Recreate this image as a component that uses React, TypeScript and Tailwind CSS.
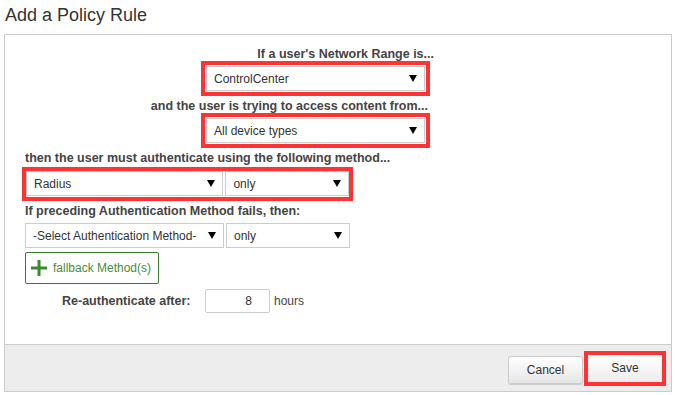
import React from "react";

const Arrow = () => (
  <span className="block h-0 w-0 border-x-[4px] border-t-[7px] border-x-transparent border-t-black" />
);

const Select = ({ value, width }: { value: string; width: string }) => (
  <div
    className={`flex h-[25px] ${width} items-center justify-between border border-[#ccc] bg-white pl-[7px] pr-[7px] text-[12px] text-[#333]`}
  >
    <span>{value}</span>
    <Arrow />
  </div>
);

const Label = ({ children, className = "" }: { children: React.ReactNode; className?: string }) => (
  <div className={`h-[14px] text-[12.5px] font-bold leading-[14px] text-[#444] ${className}`}>{children}</div>
);

const PlusIcon = () => (
  <svg width="18" height="18" viewBox="0 0 18 18" className="shrink-0">
    <path d="M9 1v16M1 9h16" stroke="#3b8a2c" strokeWidth="3" />
  </svg>
);

export default function App() {
  return (
    <div className="h-[395px] w-[678px] overflow-hidden bg-white font-['Liberation_Sans',Arial,sans-serif]">
      <div className="h-[34px] pl-[5px] pt-[4px] text-[18px] leading-[22px] text-[#333]">Add a Policy Rule</div>

      <div className="ml-[4px] w-[668px] border border-[#ccc]">
        <div className="h-[309px] pt-[12px]">
          <div className="flex w-[425px] flex-col items-end">
            <Label className="-mr-[4px]">If a user's Network Range is...</Label>
            <div className="border-4 border-[#f33] p-px">
              <Select value="ControlCenter" width="w-[219px]" />
            </div>
            <Label className="mt-[3px] mr-[2px]">and the user is trying to access content from...</Label>
            <div className="border-4 border-[#f33] p-px">
              <Select value="All device types" width="w-[219px]" />
            </div>
          </div>

          <div className="pl-[20px]">
            <Label className="mt-[3px]">then the user must authenticate using the following method...</Label>
            <div className="-ml-[3px] mt-[2px] flex h-[34px] w-[331px] items-start gap-[2px] border-4 border-[#f33]">
              <Select value="Radius" width="w-[198px]" />
              <Select value="only" width="w-[124px]" />
            </div>
            <Label className="mt-[3px]">If preceding Authentication Method fails, then:</Label>
            <div className="mt-[5px] flex gap-[2px]">
              <Select value="-Select Authentication Method-" width="w-[199px]" />
              <Select value="only" width="w-[124px]" />
            </div>
            <div className="mt-[4px] flex h-[32px] w-[134px] items-center gap-[5px] rounded-[2px] border border-[#3b7d2e] pl-[4px] text-[12px] text-[#4a8a3a]">
              <PlusIcon />
              <span>fallback Method(s)</span>
            </div>
            <div className="mt-[5px] flex h-[24px] items-center">
              <div className="ml-[37px] w-[143px] text-[12.5px] font-bold text-[#444]">Re-authenticate after:</div>
              <div className="flex h-[24px] w-[65px] items-center justify-end rounded-[2px] border border-[#ccc] pr-[17px] text-[12px] text-[#333]">
                8
              </div>
              <span className="ml-[4px] text-[12px] text-[#444]">hours</span>
            </div>
          </div>
        </div>

        <div className="flex h-[47px] items-center justify-end gap-px border-t border-[#ccc] bg-[#ededed] pr-[5px]">
          <button className="mt-[3px] h-[28px] w-[75px] rounded-[3px] border border-[#ccc] bg-gradient-to-b from-white to-[#e6e6e6] text-[12px] text-[#333] shadow-[0_1px_1px_rgba(0,0,0,0.15)]">
            Cancel
          </button>
          <div className="border-4 border-[#f33]">
            <button className="h-[27px] w-[74px] bg-gradient-to-b from-white to-[#ececec] text-[12px] text-[#333]">Save</button>
          </div>
        </div>
      </div>
    </div>
  );
}
